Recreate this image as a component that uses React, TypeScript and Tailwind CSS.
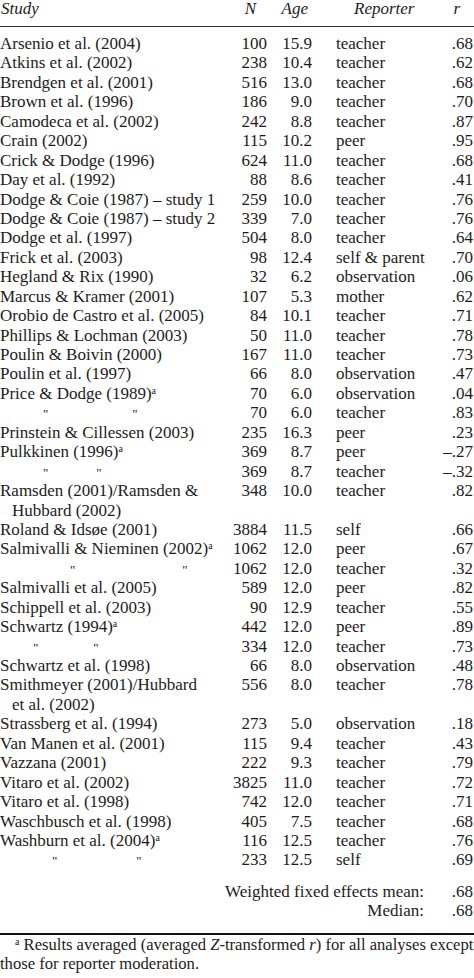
import React from "react";

type Row = {
  study: React.ReactNode;
  n?: string;
  age?: string;
  reporter?: string;
  r?: string;
};

const Sup = () => <sup className="text-[10px]">a</sup>;

const Ditto = ({ a, b }: { a: string; b: string }) => (
  <span className="text-[13px]">
    <span className={`inline-block ${a}`}>"</span>
    <span className={`inline-block ${b}`}>"</span>
  </span>
);

const rows: Row[] = [
  { study: "Arsenio et al. (2004)", n: "100", age: "15.9", reporter: "teacher", r: ".68" },
  { study: "Atkins et al. (2002)", n: "238", age: "10.4", reporter: "teacher", r: ".62" },
  { study: "Brendgen et al. (2001)", n: "516", age: "13.0", reporter: "teacher", r: ".68" },
  { study: "Brown et al. (1996)", n: "186", age: "9.0", reporter: "teacher", r: ".70" },
  { study: "Camodeca et al. (2002)", n: "242", age: "8.8", reporter: "teacher", r: ".87" },
  { study: "Crain (2002)", n: "115", age: "10.2", reporter: "peer", r: ".95" },
  { study: "Crick & Dodge (1996)", n: "624", age: "11.0", reporter: "teacher", r: ".68" },
  { study: "Day et al. (1992)", n: "88", age: "8.6", reporter: "teacher", r: ".41" },
  { study: "Dodge & Coie (1987) – study 1", n: "259", age: "10.0", reporter: "teacher", r: ".76" },
  { study: "Dodge & Coie (1987) – study 2", n: "339", age: "7.0", reporter: "teacher", r: ".76" },
  { study: "Dodge et al. (1997)", n: "504", age: "8.0", reporter: "teacher", r: ".64" },
  { study: "Frick et al. (2003)", n: "98", age: "12.4", reporter: "self & parent", r: ".70" },
  { study: "Hegland & Rix (1990)", n: "32", age: "6.2", reporter: "observation", r: ".06" },
  { study: "Marcus & Kramer (2001)", n: "107", age: "5.3", reporter: "mother", r: ".62" },
  { study: "Orobio de Castro et al. (2005)", n: "84", age: "10.1", reporter: "teacher", r: ".71" },
  { study: "Phillips & Lochman (2003)", n: "50", age: "11.0", reporter: "teacher", r: ".78" },
  { study: "Poulin & Boivin (2000)", n: "167", age: "11.0", reporter: "teacher", r: ".73" },
  { study: "Poulin et al. (1997)", n: "66", age: "8.0", reporter: "observation", r: ".47" },
  { study: <>Price & Dodge (1989)<Sup /></>, n: "70", age: "6.0", reporter: "observation", r: ".04" },
  { study: <Ditto a="ml-[43px]" b="ml-[84px]" />, n: "70", age: "6.0", reporter: "teacher", r: ".83" },
  { study: "Prinstein & Cillessen (2003)", n: "235", age: "16.3", reporter: "peer", r: ".23" },
  { study: <>Pulkkinen (1996)<Sup /></>, n: "369", age: "8.7", reporter: "peer", r: "–.27" },
  { study: <Ditto a="ml-[43px]" b="ml-[48px]" />, n: "369", age: "8.7", reporter: "teacher", r: "–.32" },
  { study: "Ramsden (2001)/Ramsden &", n: "348", age: "10.0", reporter: "teacher", r: ".82" },
  { study: <span className="pl-[12px]">Hubbard (2002)</span> },
  { study: "Roland & Idsøe (2001)", n: "3884", age: "11.5", reporter: "self", r: ".66" },
  { study: <>Salmivalli & Nieminen (2002)<Sup /></>, n: "1062", age: "12.0", reporter: "peer", r: ".67" },
  { study: <Ditto a="ml-[70px]" b="ml-[107px]" />, n: "1062", age: "12.0", reporter: "teacher", r: ".32" },
  { study: "Salmivalli et al. (2005)", n: "589", age: "12.0", reporter: "peer", r: ".82" },
  { study: "Schippell et al. (2003)", n: "90", age: "12.9", reporter: "teacher", r: ".55" },
  { study: <>Schwartz (1994)<Sup /></>, n: "442", age: "12.0", reporter: "peer", r: ".89" },
  { study: <Ditto a="ml-[33px]" b="ml-[55px]" />, n: "334", age: "12.0", reporter: "teacher", r: ".73" },
  { study: "Schwartz et al. (1998)", n: "66", age: "8.0", reporter: "observation", r: ".48" },
  { study: "Smithmeyer (2001)/Hubbard", n: "556", age: "8.0", reporter: "teacher", r: ".78" },
  { study: <span className="pl-[12px]">et al. (2002)</span> },
  { study: "Strassberg et al. (1994)", n: "273", age: "5.0", reporter: "observation", r: ".18" },
  { study: "Van Manen et al. (2001)", n: "115", age: "9.4", reporter: "teacher", r: ".43" },
  { study: "Vazzana (2001)", n: "222", age: "9.3", reporter: "teacher", r: ".79" },
  { study: "Vitaro et al. (2002)", n: "3825", age: "11.0", reporter: "teacher", r: ".72" },
  { study: "Vitaro et al. (1998)", n: "742", age: "12.0", reporter: "teacher", r: ".71" },
  { study: "Waschbusch et al. (1998)", n: "405", age: "7.5", reporter: "teacher", r: ".68" },
  { study: <>Washburn et al. (2004)<Sup /></>, n: "116", age: "12.5", reporter: "teacher", r: ".76" },
  { study: <Ditto a="ml-[52px]" b="ml-[79px]" />, n: "233", age: "12.5", reporter: "self", r: ".69" },
];

const grid = "grid grid-cols-[225px_42px_45px_128px_1fr]";

export default function App() {
  return (
    <div
      className="w-[474px] h-[978px] overflow-hidden bg-white text-[#1c1c1c] text-[17px]"
      style={{ fontFamily: '"Liberation Serif", "Times New Roman", serif' }}
    >
      <div className={`${grid} italic h-[18px] leading-[18px] mb-[8px]`}>
        <div className="pl-[1px]">Study</div>
        <div className="text-right pr-[11px]">N</div>
        <div className="text-right pr-[4px]">Age</div>
        <div className="pl-[42px]">Reporter</div>
        <div className="text-right pr-[14px]">r</div>
      </div>
      <div className="border-t border-[#333]" />

      <div className="pt-[7px]">
        {rows.map((row, i) => (
          <div key={i} className={`${grid} h-[19.45px] leading-[19.45px] whitespace-nowrap`}>
            <div>{row.study}</div>
            <div className="text-right">{row.n}</div>
            <div className="text-right">{row.age}</div>
            <div className="pl-[24px]">{row.reporter}</div>
            <div className="text-right pr-[1px]">{row.r}</div>
          </div>
        ))}
      </div>

      <div className="pt-[12px] pb-[12px]">
        <div className={`${grid} h-[19.45px] leading-[19.45px]`}>
          <div className="col-span-4 text-right pr-[16px]">Weighted fixed effects mean:</div>
          <div className="text-right pr-[1px]">.68</div>
        </div>
        <div className={`${grid} h-[19.45px] leading-[19.45px]`}>
          <div className="col-span-4 text-right pr-[16px]">Median:</div>
          <div className="text-right pr-[1px]">.68</div>
        </div>
      </div>

      <div className="border-t-2 border-[#111]" />

      <div className="whitespace-nowrap leading-[19px] text-[16.6px]">
        <div className="pl-[15px]">
          <sup className="text-[10px]">a</sup> Results averaged (averaged <i>Z</i>-transformed <i>r</i>) for all analyses except
        </div>
        <div>those for reporter moderation.</div>
      </div>
    </div>
  );
}
